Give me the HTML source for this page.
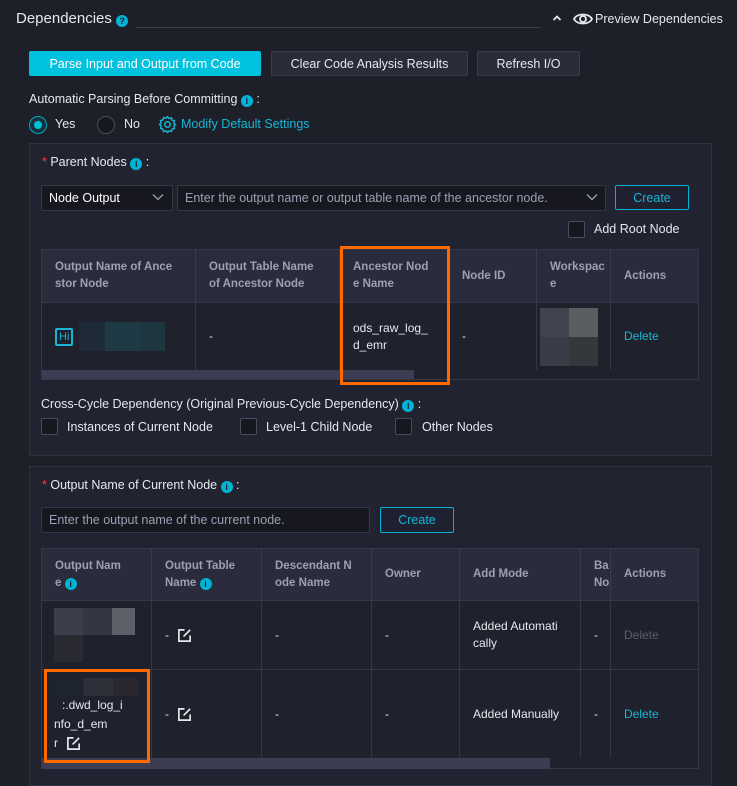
<!DOCTYPE html>
<html><head><meta charset="utf-8"><style>
*{box-sizing:border-box;margin:0;padding:0}
body{width:737px;height:782px;background:#1e2029;font-family:"Liberation Sans",sans-serif;color:#e6e8ef;font-size:12.5px;position:relative;overflow:hidden}
.a{position:absolute}
.btn{position:absolute;height:25px;border:1px solid #3a3c4c;background:#2a2c39;color:#e6e8ef;font-size:12.5px;display:flex;align-items:center;justify-content:center;border-radius:2px}
.panel{position:absolute;border:1px solid #2f3140;background:#212330}
.info{display:inline-block;width:12px;height:12px;border-radius:50%;background:#00b4d8;color:#1e2029;font-size:9px;font-weight:bold;text-align:center;line-height:12px;vertical-align:-1px}
.inp{position:absolute;height:26px;background:#16171f;border:1px solid #363848;color:#9aa0b4;font-size:12.5px;padding-left:7px;display:flex;align-items:center;border-radius:2px}
.cb{position:absolute;width:17px;height:17px;border:1px solid #4a4c5c;background:#16171f;border-radius:2px}
.th{position:absolute;background:#2a2c3b;color:#9ba0b5;font-weight:bold;font-size:11.5px;line-height:17px;padding:0 0 0 13px;display:flex;align-items:center;border-right:1px solid #3a3c4c}
.td{position:absolute;background:#1f212d;border-right:1px solid #353747;border-top:1px solid #353747;color:#e6e8ef;font-size:12px;line-height:17px;padding-left:13px;display:flex;align-items:center}
.red{color:#ff3b3b}
.cy{color:#17b6d6}
.ob{position:absolute;border:3px solid #ff6a00}
.ed{display:inline-block;width:15px;height:15px;vertical-align:middle;margin-left:8px}
</style></head><body>
<div class="a" style="left:16px;top:10px;font-size:15px">Dependencies <span class="info">?</span></div>
<div class="a" style="left:136px;top:27px;width:405px;height:1px;background:#3a3c4a"></div>
<svg class="a" style="left:552px;top:14px" width="10" height="8" viewBox="0 0 10 8"><path d="M1.5 6L5 2.5L8.5 6" stroke="#e6e8ef" stroke-width="1.8" fill="none"/></svg>
<svg class="a" style="left:573px;top:11px" width="20" height="16" viewBox="0 0 20 16"><path d="M1 8C4 2 16 2 19 8C16 14 4 14 1 8Z" stroke="#e6e8ef" stroke-width="1.8" fill="none"/><circle cx="10" cy="8" r="3" stroke="#e6e8ef" stroke-width="1.8" fill="none"/></svg>
<div class="a" style="left:595px;top:12px;font-size:12.5px">Preview Dependencies</div>

<div class="btn" style="left:29px;top:51px;width:232px;background:#00c1de;border-color:#00c1de;color:#fff">Parse Input and Output from Code</div>
<div class="btn" style="left:271px;top:51px;width:197px">Clear Code Analysis Results</div>
<div class="btn" style="left:477px;top:51px;width:103px">Refresh I/O</div>

<div class="a" style="left:29px;top:92px">Automatic Parsing Before Committing <span class="info">i</span> :</div>
<div class="a" style="left:29px;top:116px;width:18px;height:18px;border-radius:50%;border:1px solid #00a5c4;background:#16313d"><div style="position:absolute;left:4px;top:4px;width:8px;height:8px;border-radius:50%;background:#00c1de"></div></div>
<div class="a" style="left:55px;top:117px">Yes</div>
<div class="a" style="left:97px;top:116px;width:18px;height:18px;border-radius:50%;border:1px solid #4a4c5c;background:#16171f"></div>
<div class="a" style="left:124px;top:117px">No</div>
<svg class="a" style="left:158px;top:115px" width="19" height="19" viewBox="0 0 24 24"><path d="M12 2l2 2.5 3-.8.8 3 3 .8-.8 3L22 12l-2 2 .8 3-3 .8-.8 3-3-.8L12 22l-2-2-3 .8-.8-3-3-.8.8-3L2 12l2-2-.8-3 3-.8.8-3 3 .8z" stroke="#17b6d6" stroke-width="1.8" fill="none"/><circle cx="12" cy="12" r="3.5" stroke="#17b6d6" stroke-width="1.8" fill="none"/></svg>
<div class="a cy" style="left:181px;top:117px">Modify Default Settings</div>

<div class="panel" style="left:29px;top:143px;width:683px;height:313px"></div>
<div class="a" style="left:42px;top:155px"><span class="red">*</span> Parent Nodes <span class="info">i</span> :</div>
<div class="inp" style="left:41px;top:185px;width:132px;color:#fff">Node Output</div>
<svg class="a" style="left:152px;top:193px" width="12" height="8"><path d="M1 1.5l5 5 5-5" stroke="#9aa0b4" stroke-width="1.3" fill="none"/></svg>
<div class="inp" style="left:177px;top:185px;width:429px">Enter the output name or output table name of the ancestor node.</div>
<svg class="a" style="left:586px;top:193px" width="12" height="8"><path d="M1 1.5l5 5 5-5" stroke="#9aa0b4" stroke-width="1.3" fill="none"/></svg>
<div class="btn" style="left:615px;top:185px;width:74px;border-color:#00b4d8;color:#17b6d6;background:#1f2130">Create</div>
<div class="cb" style="left:568px;top:221px"></div>
<div class="a" style="left:594px;top:222px">Add Root Node</div>

<div class="a" style="left:41px;top:249px;width:658px;height:131px;border:1px solid #353747;background:#1f212d"></div>
<div class="th" style="left:42px;top:250px;width:154px;height:52px"><div>Output Name of Ance<br>stor Node</div></div>
<div class="th" style="left:196px;top:250px;width:144px;height:52px"><div>Output Table Name<br>of Ancestor Node</div></div>
<div class="th" style="left:340px;top:250px;width:109px;height:52px"><div>Ancestor Nod<br>e Name</div></div>
<div class="th" style="left:449px;top:250px;width:88px;height:52px">Node ID</div>
<div class="th" style="left:537px;top:250px;width:74px;height:52px"><div>Workspac<br>e</div></div>
<div class="th" style="left:611px;top:250px;width:87px;height:52px;border-right:none">Actions</div>
<div class="td" style="left:42px;top:302px;width:154px;height:68px"><span style="border:2px solid #17b6d6;color:#17b6d6;font-size:11px;line-height:14px;padding:0 2px;border-radius:2px">Hi</span><span style="display:inline-block;width:86px;height:29px;margin-left:6px;background:linear-gradient(90deg,#1e2a36 0 30%,#1d3a45 30% 70%,#1d3640 70%)"></span></div>
<div class="td" style="left:196px;top:302px;width:144px;height:68px">-</div>
<div class="td" style="left:340px;top:302px;width:109px;height:68px"><div>ods_raw_log_<br>d_emr</div></div>
<div class="td" style="left:449px;top:302px;width:88px;height:68px">-</div>
<div class="td" style="left:537px;top:302px;width:74px;height:68px;padding-left:3px"><span style="display:grid;grid-template-columns:29px 29px;grid-template-rows:29px 29px"><i style="background:#41434f"></i><i style="background:#5a5e60"></i><i style="background:#3a3c48"></i><i style="background:#34383d"></i></span></div>
<div class="td" style="left:611px;top:302px;width:87px;height:68px;border-right:none;color:#17b6d6">Delete</div>
<div class="a" style="left:42px;top:370px;width:372px;height:9px;background:#3c3d52"></div>
<div class="ob" style="left:340px;top:246px;width:110px;height:139px"></div>

<div class="a" style="left:41px;top:397px">Cross-Cycle Dependency (Original Previous-Cycle Dependency) <span class="info">i</span> :</div>
<div class="cb" style="left:41px;top:418px"></div><div class="a" style="left:67px;top:420px">Instances of Current Node</div>
<div class="cb" style="left:240px;top:418px"></div><div class="a" style="left:266px;top:420px">Level-1 Child Node</div>
<div class="cb" style="left:395px;top:418px"></div><div class="a" style="left:422px;top:420px">Other Nodes</div>

<div class="panel" style="left:29px;top:466px;width:683px;height:320px"></div>
<div class="a" style="left:42px;top:478px"><span class="red">*</span> Output Name of Current Node <span class="info">i</span> :</div>
<div class="inp" style="left:41px;top:507px;width:329px">Enter the output name of the current node.</div>
<div class="btn" style="left:380px;top:507px;width:74px;height:26px;border-color:#00b4d8;color:#17b6d6;background:#1f2130">Create</div>

<div class="a" style="left:41px;top:548px;width:658px;height:221px;border:1px solid #353747;background:#1f212d"></div>
<div class="th" style="left:42px;top:549px;width:110px;height:51px"><div>Output Nam<br>e <span class="info">i</span></div></div>
<div class="th" style="left:152px;top:549px;width:110px;height:51px"><div>Output Table<br>Name <span class="info">i</span></div></div>
<div class="th" style="left:262px;top:549px;width:110px;height:51px"><div>Descendant N<br>ode Name</div></div>
<div class="th" style="left:372px;top:549px;width:88px;height:51px">Owner</div>
<div class="th" style="left:460px;top:549px;width:121px;height:51px">Add Mode</div>
<div class="th" style="left:581px;top:549px;width:30px;height:51px"><div>Ba<br>No</div></div>
<div class="th" style="left:611px;top:549px;width:87px;height:51px;border-right:none">Actions</div>

<div class="td" style="left:42px;top:600px;width:110px;height:69px;padding-left:12px"><span style="display:grid;grid-template-columns:29px 29px 23px;grid-template-rows:27px 27px"><i style="background:#3c3e4c"></i><i style="background:#343642"></i><i style="background:#5d6068"></i><i style="background:#2a2a33"></i><i></i><i></i></span></div>
<div class="td" style="left:152px;top:600px;width:110px;height:69px">-<svg class="ed" viewBox="0 0 16 16"><path d="M8 2H2v12h12V8" stroke="#e6e8ef" stroke-width="1.8" fill="none"/><path d="M7 9l7-7" stroke="#e6e8ef" stroke-width="1.8"/></svg></div>
<div class="td" style="left:262px;top:600px;width:110px;height:69px">-</div>
<div class="td" style="left:372px;top:600px;width:88px;height:69px">-</div>
<div class="td" style="left:460px;top:600px;width:121px;height:69px"><div>Added Automati<br>cally</div></div>
<div class="td" style="left:581px;top:600px;width:30px;height:69px">-</div>
<div class="td" style="left:611px;top:600px;width:87px;height:69px;border-right:none;color:#5a5d6a">Delete</div>

<div class="td" style="left:42px;top:669px;width:110px;height:89px;padding-left:12px;display:block;padding-top:8px;line-height:19px"><span style="display:block;width:84px;height:18px;background:linear-gradient(90deg,#1f2431 0 35%,#2e3039 35% 70%,#2a272e 70%)"></span><span style="display:block;padding-left:8px">:.dwd_log_i</span>nfo_d_em<br>r<svg class="ed" viewBox="0 0 16 16"><path d="M8 2H2v12h12V8" stroke="#e6e8ef" stroke-width="1.8" fill="none"/><path d="M7 9l7-7" stroke="#e6e8ef" stroke-width="1.8"/></svg></div>
<div class="td" style="left:152px;top:669px;width:110px;height:89px">-<svg class="ed" viewBox="0 0 16 16"><path d="M8 2H2v12h12V8" stroke="#e6e8ef" stroke-width="1.8" fill="none"/><path d="M7 9l7-7" stroke="#e6e8ef" stroke-width="1.8"/></svg></div>
<div class="td" style="left:262px;top:669px;width:110px;height:89px">-</div>
<div class="td" style="left:372px;top:669px;width:88px;height:89px">-</div>
<div class="td" style="left:460px;top:669px;width:121px;height:89px">Added Manually</div>
<div class="td" style="left:581px;top:669px;width:30px;height:89px">-</div>
<div class="td" style="left:611px;top:669px;width:87px;height:89px;border-right:none;color:#17b6d6">Delete</div>
<div class="a" style="left:42px;top:758px;width:508px;height:11px;background:#3c3d52"></div>
<div class="ob" style="left:44px;top:669px;width:106px;height:94px"></div>
</body></html>
